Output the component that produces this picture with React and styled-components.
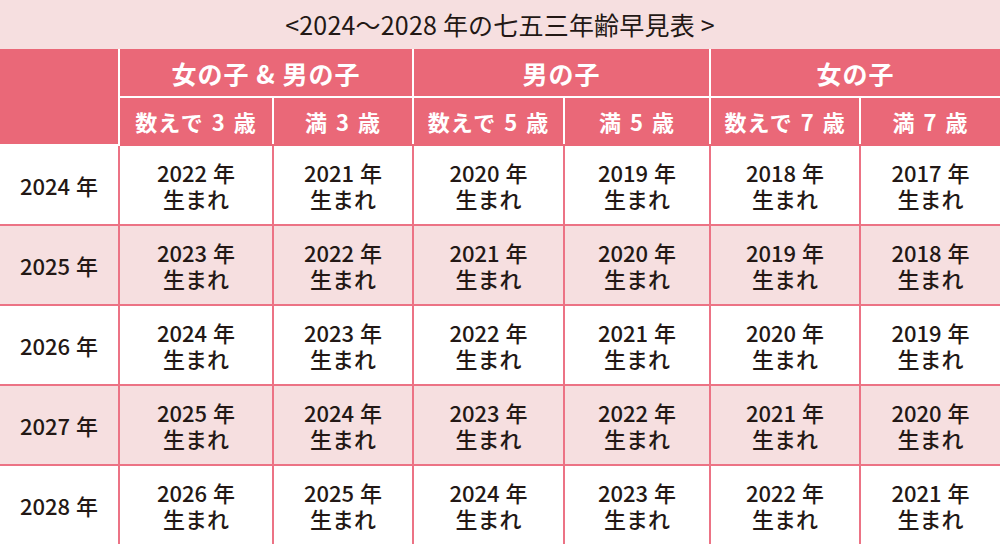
import React from 'react';
import styled, { createGlobalStyle } from 'styled-components';

const GlobalStyle = createGlobalStyle`
    html, body {
        margin: 0;
        padding: 0;
        background: #fff;
    }
    body {
        font-family: "Noto Sans CJK JP", "Noto Sans", sans-serif;
    }
`

const groups = [
    { label: '女の子 & 男の子', ages: ['数えで 3 歳', '満 3 歳'] },
    { label: '男の子', ages: ['数えで 5 歳', '満 5 歳'] },
    { label: '女の子', ages: ['数えで 7 歳', '満 7 歳'] },
]

// how many years before the row's year each age column is born
const offsets = [2, 3, 4, 5, 6, 7]
const years = [2024, 2025, 2026, 2027, 2028]
const widths = [119, 154, 140, 151, 146, 150, 140]

const App = () => {
    return (
        <>
            <GlobalStyle />
            <Wrapper>
                <Title>&lt;2024～2028 年の七五三年齢早見表 &gt;</Title>
                <Table>
                    <colgroup>
                        {widths.map((w, i) => (
                            <col key={i} style={{ width: w }} />
                        ))}
                    </colgroup>
                    <thead>
                        <tr>
                            <Corner rowSpan={2} />
                            {groups.map((g) => (
                                <GroupHead key={g.label} colSpan={2}>{g.label}</GroupHead>
                            ))}
                        </tr>
                        <tr>
                            {groups.flatMap((g) => g.ages).map((a) => (
                                <AgeHead key={a}>{a}</AgeHead>
                            ))}
                        </tr>
                    </thead>
                    <tbody>
                        {years.map((y, i) => (
                            <Row key={y} $shade={i % 2 === 1}>
                                <Cell>{y} 年</Cell>
                                {offsets.map((o) => (
                                    <Cell key={o}>
                                        <Line>{y - o} 年</Line>
                                        <Line>生まれ</Line>
                                    </Cell>
                                ))}
                            </Row>
                        ))}
                    </tbody>
                </Table>
            </Wrapper>
        </>
    )
}

export default App

const Wrapper = styled.div`
    width: 1000px;
    height: 544px;
    overflow: hidden;
    background: #fff;
`
const Title = styled.div`
    display: flex;
    justify-content: center;
    align-items: center;
    height: 49px;
    padding-bottom: 2px;
    box-sizing: border-box;
    background-color: #f6dfe0;
    color: #231815;
    font-size: 25px;
    font-weight: 400;
    letter-spacing: 0.2px;
`
const Table = styled.table`
    width: 1000px;
    table-layout: fixed;
    border-collapse: collapse;
    border-style: hidden;
`
const HeadCell = styled.th`
    background-color: #ea6878;
    color: #fff;
    font-weight: 700;
    border: 2px solid #fff;
    padding: 0;
    text-align: center;
    white-space: nowrap;
`
const Corner = styled(HeadCell)`
    border-top: none;
`
const GroupHead = styled(HeadCell)`
    height: 47px;
    border-top: none;
    font-size: 25px;
    letter-spacing: 1px;
`
const AgeHead = styled(HeadCell)`
    height: 46px;
    border-bottom-color: #ea6878;
    font-size: 22px;
    letter-spacing: 1px;
    word-spacing: 2px;
`
const Row = styled.tr`
    background-color: ${(p) => (p.$shade ? '#f6dfe0' : '#fff')};
`
const Cell = styled.td`
    height: 78px;
    padding: 0;
    border: 2px solid #ec7385;
    text-align: center;
    color: #231815;
    font-size: 22px;
    font-weight: 500;
    line-height: 26px;
    word-spacing: 1px;
`
const Line = styled.div`
    line-height: 26px;
    white-space: nowrap;
`
